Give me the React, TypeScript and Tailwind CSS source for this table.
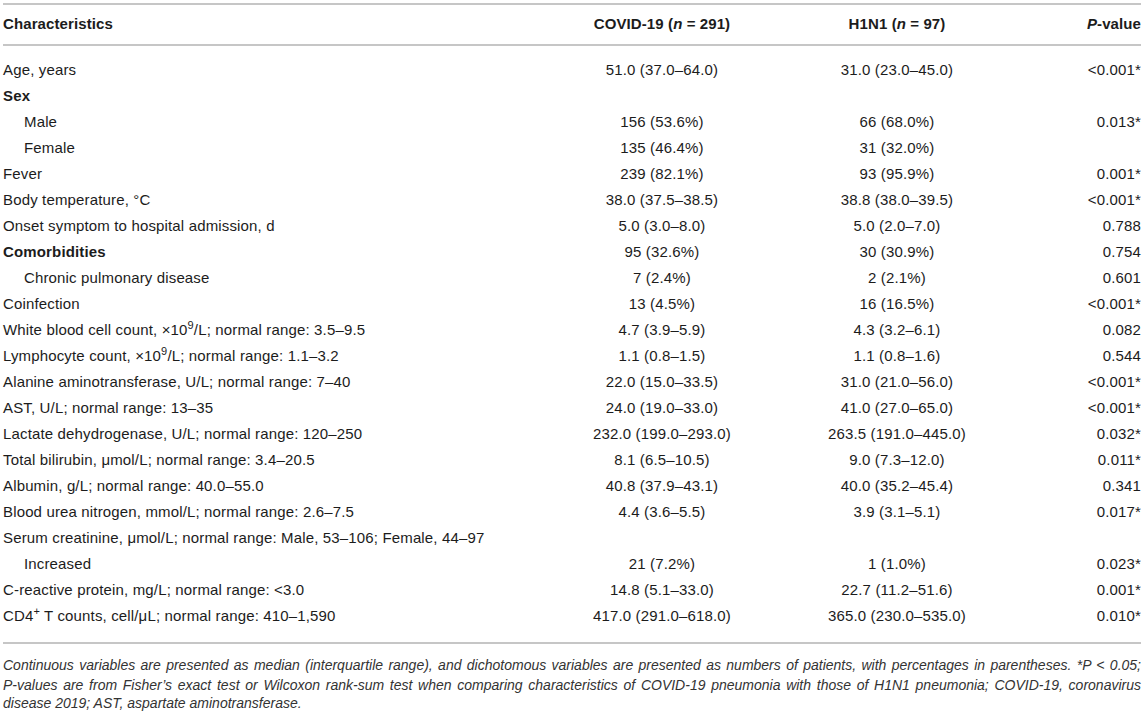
import React from "react";

type Row = { label: React.ReactNode; a?: string; b?: string; p?: string; bold?: boolean; indent?: boolean };

const Sup = ({ children }: { children: React.ReactNode }) => <sup className="text-[11px]">{children}</sup>;

const rows: Row[] = [
  { label: "Age, years", a: "51.0 (37.0–64.0)", b: "31.0 (23.0–45.0)", p: "<0.001*" },
  { label: "Sex", bold: true },
  { label: "Male", a: "156 (53.6%)", b: "66 (68.0%)", p: "0.013*", indent: true },
  { label: "Female", a: "135 (46.4%)", b: "31 (32.0%)", indent: true },
  { label: "Fever", a: "239 (82.1%)", b: "93 (95.9%)", p: "0.001*" },
  { label: "Body temperature, °C", a: "38.0 (37.5–38.5)", b: "38.8 (38.0–39.5)", p: "<0.001*" },
  { label: "Onset symptom to hospital admission, d", a: "5.0 (3.0–8.0)", b: "5.0 (2.0–7.0)", p: "0.788" },
  { label: "Comorbidities", a: "95 (32.6%)", b: "30 (30.9%)", p: "0.754", bold: true },
  { label: "Chronic pulmonary disease", a: "7 (2.4%)", b: "2 (2.1%)", p: "0.601", indent: true },
  { label: "Coinfection", a: "13 (4.5%)", b: "16 (16.5%)", p: "<0.001*" },
  {
    label: (
      <>
        White blood cell count, ×10<Sup>9</Sup>/L; normal range: 3.5–9.5
      </>
    ),
    a: "4.7 (3.9–5.9)",
    b: "4.3 (3.2–6.1)",
    p: "0.082",
  },
  {
    label: (
      <>
        Lymphocyte count, ×10<Sup>9</Sup>/L; normal range: 1.1–3.2
      </>
    ),
    a: "1.1 (0.8–1.5)",
    b: "1.1 (0.8–1.6)",
    p: "0.544",
  },
  { label: "Alanine aminotransferase, U/L; normal range: 7–40", a: "22.0 (15.0–33.5)", b: "31.0 (21.0–56.0)", p: "<0.001*" },
  { label: "AST, U/L; normal range: 13–35", a: "24.0 (19.0–33.0)", b: "41.0 (27.0–65.0)", p: "<0.001*" },
  { label: "Lactate dehydrogenase, U/L; normal range: 120–250", a: "232.0 (199.0–293.0)", b: "263.5 (191.0–445.0)", p: "0.032*" },
  { label: "Total bilirubin, μmol/L; normal range: 3.4–20.5", a: "8.1 (6.5–10.5)", b: "9.0 (7.3–12.0)", p: "0.011*" },
  { label: "Albumin, g/L; normal range: 40.0–55.0", a: "40.8 (37.9–43.1)", b: "40.0 (35.2–45.4)", p: "0.341" },
  { label: "Blood urea nitrogen, mmol/L; normal range: 2.6–7.5", a: "4.4 (3.6–5.5)", b: "3.9 (3.1–5.1)", p: "0.017*" },
  { label: "Serum creatinine, μmol/L; normal range: Male, 53–106; Female, 44–97" },
  { label: "Increased", a: "21 (7.2%)", b: "1 (1.0%)", p: "0.023*", indent: true },
  { label: "C-reactive protein, mg/L; normal range: <3.0", a: "14.8 (5.1–33.0)", b: "22.7 (11.2–51.6)", p: "0.001*" },
  {
    label: (
      <>
        CD4<Sup>+</Sup> T counts, cell/μL; normal range: 410–1,590
      </>
    ),
    a: "417.0 (291.0–618.0)",
    b: "365.0 (230.0–535.0)",
    p: "0.010*",
  },
];

export default function App() {
  return (
    <div className="w-[1145px] h-[712px] bg-white text-[#1c1c1c] overflow-hidden" style={{ fontFamily: '"Liberation Sans", Arial, sans-serif' }}>
      <div className="pt-[3px] pl-[3px] pr-[4px]">
        <div className="border-t-2 border-[#c6c6c6]" />
        <div className="grid grid-cols-[542px_234px_236px_1fr] h-[39px] items-center text-[15px] font-bold tracking-[0.1px]">
          <div>Characteristics</div>
          <div className="text-center">
            COVID-19 (<i>n</i> = 291)
          </div>
          <div className="text-center">
            H1N1 (<i>n</i> = 97)
          </div>
          <div className="text-right">
            <i>P</i>-value
          </div>
        </div>
        <div className="border-t-2 border-[#c6c6c6]" />
        <div className="pt-[11px] pb-[13px] text-[15px] tracking-[0.15px]">
          {rows.map((r, i) => (
            <div key={i} className="grid grid-cols-[542px_234px_236px_1fr] h-[26px] items-center">
              <div className={(r.bold ? "font-bold " : "") + (r.indent ? "pl-[21px]" : "")}>{r.label}</div>
              <div className="text-center">{r.a ?? ""}</div>
              <div className="text-center">{r.b ?? ""}</div>
              <div className="text-right">{r.p ?? ""}</div>
            </div>
          ))}
        </div>
        <div className="border-t-2 border-[#c6c6c6]" />
        <div className="pt-[11px] italic text-[14px] leading-[20px] text-[#333]">
          <div className="text-justify [text-align-last:justify]">
            Continuous variables are presented as median (interquartile range), and dichotomous variables are presented as numbers of patients, with percentages in parentheses. *P &lt; 0.05;
          </div>
          <div className="text-justify [text-align-last:justify]">
            P-values are from Fisher’s exact test or Wilcoxon rank-sum test when comparing characteristics of COVID-19 pneumonia with those of H1N1 pneumonia; COVID-19, coronavirus
          </div>
          <div className="mt-[1px] leading-[15px]">disease 2019; AST, aspartate aminotransferase.</div>
        </div>
      </div>
    </div>
  );
}
